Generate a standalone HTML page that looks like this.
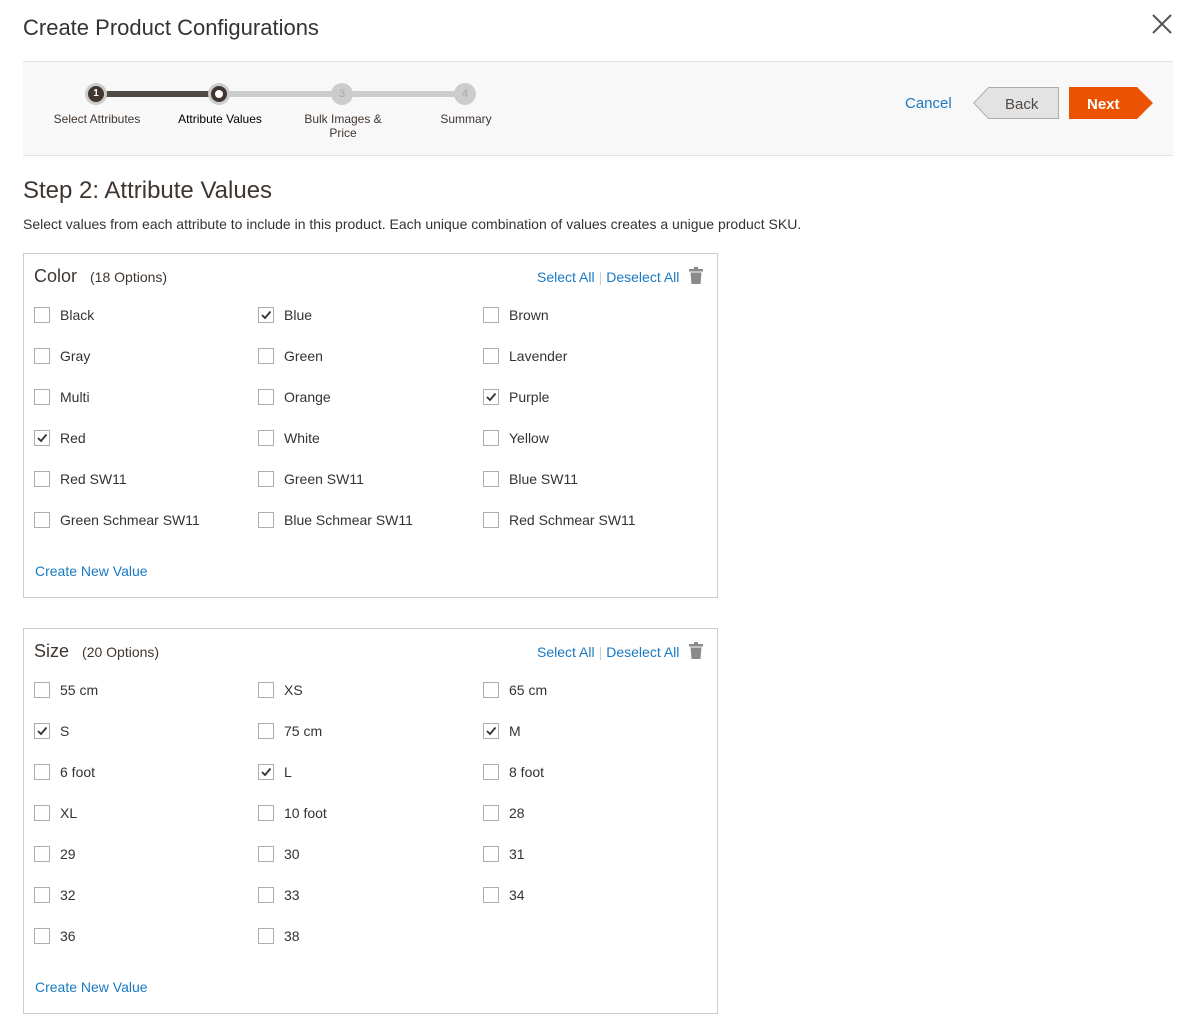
<!DOCTYPE html>
<html><head><meta charset="utf-8"><style>
*{box-sizing:border-box;margin:0;padding:0}
body{width:1196px;height:1032px;background:#fff;font-family:"Liberation Sans",sans-serif;color:#333;position:relative;overflow:hidden}
.a{position:absolute;white-space:nowrap}
h1{position:absolute;left:23px;top:15px;font-size:22px;font-weight:normal;color:#333}
.close{position:absolute;left:1150px;top:12px;width:24px;height:24px}
.wiz{position:absolute;left:23px;top:61px;width:1150px;height:95px;background:#f8f8f8;border-top:1px solid #e3e3e3;border-bottom:1px solid #e3e3e3}
.lbl{font-size:12px;color:#41362f;text-align:center;position:absolute;width:120px;line-height:14px}
.panel{position:absolute;left:23px;width:695px;border:1px solid #ccc}
.cb{position:absolute;width:16px;height:16px;border:1px solid #adadad;background:#fff}
.cb svg{position:absolute;left:1px;top:1px}
.t{position:absolute;font-size:14px;color:#333}
.link{color:#1979c3;font-size:14px}
</style></head><body>
<h1>Create Product Configurations</h1>
<svg class="close" viewBox="0 0 24 24"><path d="M3 3L21 21M21 3L3 21" stroke="#555" stroke-width="2"/></svg>
<div class="wiz">
 <div class="a" style="left:73px;top:29px;width:370px;height:6px;background:#ccc"></div>
 <div class="a" style="left:73px;top:29px;width:124px;height:6px;background:#514943"></div>
 <div class="a" style="left:62px;top:21px;width:22px;height:22px;border-radius:50%;background:#ccc"></div>
 <div class="a" style="left:65px;top:24px;width:16px;height:16px;border-radius:50%;background:#41362f;color:#fff;font-size:10px;text-align:center;line-height:16px;font-weight:bold">1</div>
 <div class="a" style="left:185px;top:21px;width:22px;height:22px;border-radius:50%;background:#ccc"></div>
 <div class="a" style="left:188px;top:24px;width:16px;height:16px;border-radius:50%;background:#41362f"></div>
 <div class="a" style="left:192px;top:28px;width:8px;height:8px;border-radius:50%;background:#fff"></div>
 <div class="a" style="left:308px;top:21px;width:22px;height:22px;border-radius:50%;background:#ccc;color:#aaa;font-size:11px;text-align:center;line-height:22px">3</div>
 <div class="a" style="left:431px;top:21px;width:22px;height:22px;border-radius:50%;background:#ccc;color:#aaa;font-size:11px;text-align:center;line-height:22px">4</div>
 <div class="lbl" style="left:14px;top:50px">Select Attributes</div>
 <div class="lbl" style="left:137px;top:50px;color:#000">Attribute Values</div>
 <div class="lbl" style="left:260px;top:50px">Bulk Images &amp;<br>Price</div>
 <div class="lbl" style="left:383px;top:50px">Summary</div>
 <div class="a link" style="left:882px;top:33px;font-size:15px">Cancel</div>
 <svg class="a" style="left:950px;top:25px" width="87" height="33"><path d="M15.5 .5H85.5V31.5H15.5L.8 16Z" fill="#e3e3e3" stroke="#adadad"/><text x="32" y="22" font-size="15" fill="#514943" font-family="Liberation Sans">Back</text></svg>
 <svg class="a" style="left:1046px;top:25px" width="85" height="33"><path d="M0 0H68L84 16L68 32H0Z" fill="#eb5202"/><text x="18" y="22" font-size="15" font-weight="bold" fill="#fff" font-family="Liberation Sans">Next</text></svg>
</div>
<div class="a" style="left:23px;top:177px;font-size:24px;color:#41362f">Step 2: Attribute Values</div>
<div class="a" style="left:23px;top:216px;font-size:14px">Select values from each attribute to include in this product. Each unique combination of values creates a unigue product SKU.</div>
<div id="p1" class="panel" style="top:253px;height:345px"></div>
<div id="p2" class="panel" style="top:628px;height:386px"></div>
<script>
function panel(top,title,count,items,checked,linkY){
 var h='';
 h+='<div class="a" style="left:34px;top:'+(top+13)+'px;font-size:18px;color:#41362f">'+title+' <span style="font-size:14px;margin-left:8px">('+count+' Options)</span></div>';
 h+='<div class="a link" style="left:537px;top:'+(top+16)+'px">Select All<span style="color:#ccc;margin:0 4px">|</span>Deselect All</div>';
 h+='<svg class="a" style="left:689px;top:'+(top+14)+'px" width="14" height="17"><rect x="0" y="2" width="14" height="2.5" fill="#8a8a8a"/><rect x="5" y="0" width="4" height="2.5" fill="#8a8a8a"/><path d="M1.5 5.5H12.5L11.5 17H2.5Z" fill="#8a8a8a"/></svg>';
 items.forEach(function(s,i){
  var c=i%3,r=Math.floor(i/3);var x=[34,258,483][c],y=top+54+r*41;
  h+='<div class="cb" style="left:'+x+'px;top:'+y+'px">'+(checked.indexOf(s)>=0?'<svg width="12" height="12"><path d="M2 6L5 9L10.5 2.5" stroke="#333" stroke-width="1.8" fill="none"/></svg>':'')+'</div>';
  h+='<div class="t" style="left:'+(x+26)+'px;top:'+(y+0)+'px">'+s+'</div>';
 });
 h+='<div class="a link" style="left:35px;top:'+linkY+'px">Create New Value</div>';
 document.body.insertAdjacentHTML('beforeend',h);
}
panel(253,'Color',18,['Black','Blue','Brown','Gray','Green','Lavender','Multi','Orange','Purple','Red','White','Yellow','Red SW11','Green SW11','Blue SW11','Green Schmear SW11','Blue Schmear SW11','Red Schmear SW11'],['Blue','Purple','Red'],563);
panel(628,'Size',20,['55 cm','XS','65 cm','S','75 cm','M','6 foot','L','8 foot','XL','10 foot','28','29','30','31','32','33','34','36','38'],['S','M','L'],979);
</script>
</body></html>
